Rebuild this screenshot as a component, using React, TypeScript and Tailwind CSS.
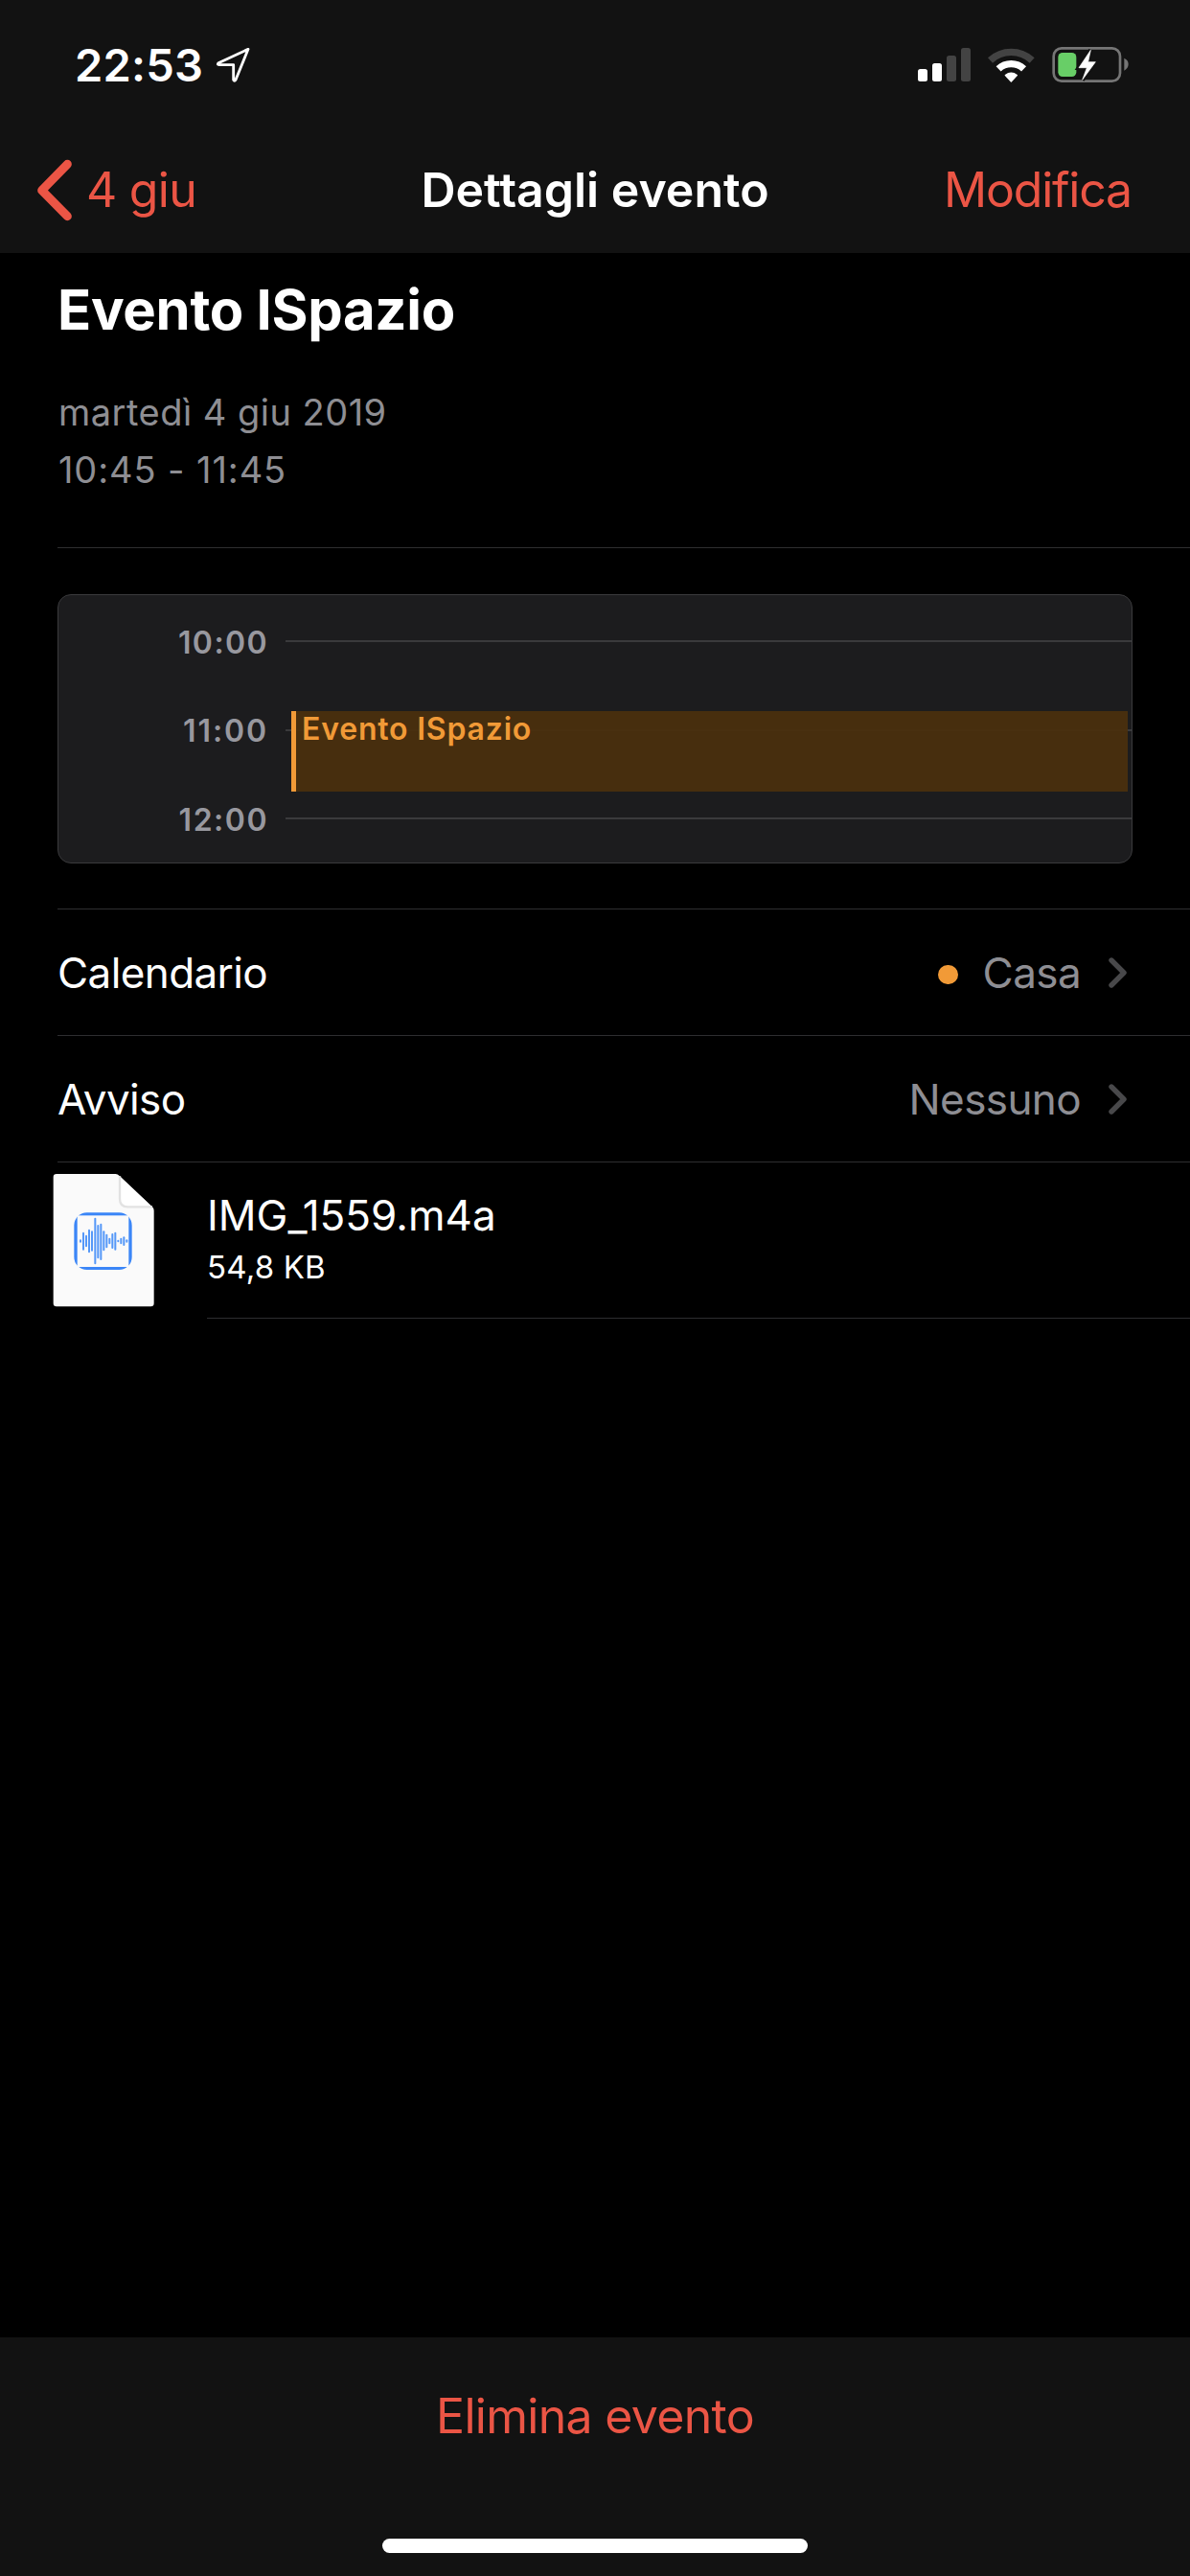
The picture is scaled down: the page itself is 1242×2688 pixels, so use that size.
import type { ReactNode } from 'react';

const HOURS = [
  { label: '10:00', tracking: 'tracking-[1.4px]' },
  { label: '11:00', tracking: 'tracking-[1.9px]' },
  { label: '12:00', tracking: 'tracking-[1.5px]' },
];

// [x, top, bottom] of every bar in the audio waveform
const WAVE_BARS = [
  [102, 236, 244],
  [111, 213, 268],
  [120, 222, 258],
  [129, 204, 276],
  [138, 209, 271],
  [148, 168, 312],
  [157, 190, 294],
  [166, 186, 299],
  [175, 209, 270],
  [184, 219, 261],
  [193, 231, 249],
  [202, 217, 263],
  [211, 213, 268],
  [220, 237, 243],
  [229, 231, 249],
  [238, 227, 254],
  [247, 236, 244],
];

function LocationIcon() {
  return (
    <svg className="w-[37px] h-[39px]" viewBox="676 148 111 117" fill="none">
      <path
        d="M778 158 L685 201 Q680 207 687 207 L732 207 L732 254 Q735 260 739 254 Z"
        stroke="#fff"
        strokeWidth="8.5"
        strokeLinejoin="round"
      />
    </svg>
  );
}

function SignalIcon() {
  return (
    <svg className="w-[55px] h-[35px]" viewBox="0 0 55 35">
      <rect x="0" y="22" width="10" height="13" rx="2.5" fill="#fff" />
      <rect x="15" y="16" width="10" height="19" rx="2.5" fill="#fff" />
      <rect x="30" y="8" width="10" height="27" rx="2.5" fill="#434343" />
      <rect x="45" y="0" width="10" height="35" rx="2.5" fill="#434343" />
    </svg>
  );
}

function WifiIcon() {
  return (
    <svg className="w-[49px] h-[38px]" viewBox="33 24 147 114" fill="none">
      <path d="M40.5 66 A96 96 0 0 1 171.5 66" stroke="#434343" strokeWidth="22" />
      <path d="M66.4 92.6 A58 58 0 0 1 145.6 92.6" stroke="#fff" strokeWidth="22" />
      <path
        d="M88 112.5 Q106 99 124 112.5 L106 132 Z"
        fill="#fff"
        stroke="#fff"
        strokeWidth="4"
        strokeLinejoin="round"
      />
    </svg>
  );
}

function BatteryIcon() {
  const bolt = 'M144 37 L107 92 L132 92 L118 130 L159 74 L136 74 Z';

  return (
    <svg className="w-[81px] h-[39px]" viewBox="20 24 243 117" fill="none">
      <rect x="28" y="31" width="208" height="103" rx="25" stroke="#757575" strokeWidth="8" />
      <path d="M249 62 Q262 68 262 81 Q262 94 249 101 Z" fill="#757575" />
      <rect x="42" y="45" width="57" height="75" rx="14" fill="#68ce67" />
      <path d={bolt} fill="#121212" stroke="#121212" strokeWidth="14" />
      <path d={bolt} fill="#fff" stroke="#fff" strokeWidth="2" strokeLinejoin="round" />
    </svg>
  );
}

function BackIcon() {
  return (
    <svg className="w-[38px] h-[65px]" viewBox="114 498 114 195" fill="none">
      <path
        d="M211 514 L131 596 L211 677"
        stroke="#eb5545"
        strokeWidth="27"
        strokeLinecap="round"
        strokeLinejoin="round"
      />
    </svg>
  );
}

function DisclosureIcon() {
  return (
    <svg className="w-5 h-8" viewBox="0 0 20 32" fill="none">
      <path
        d="M3 3 L16 16 L3 29"
        stroke="#48484a"
        strokeWidth="5.4"
        strokeLinecap="round"
        strokeLinejoin="round"
      />
    </svg>
  );
}

function AudioFileIcon() {
  return (
    <svg className="w-[106px] h-[139px]" viewBox="15 30 318 417" fill="none">
      <path
        d="M27 30 H212 Q219 30 223 35 L328 134 Q332 138 332 145 V435 Q332 445 322 445 H27 Q17 445 17 435 V40 Q17 30 27 30 Z"
        fill="#fafafa"
      />
      <path d="M224 36 V108 Q224 134 250 134 H328 Z" fill="#fff" />
      <path d="M225 37 V108 Q225 133 250 133 H327" stroke="#e2e2e2" strokeWidth="7" />
      <rect x="82" y="151" width="181" height="179" rx="40" fill="#3b86f7" />
      <rect x="92" y="160" width="161" height="161" fill="#fafafa" />
      {WAVE_BARS.map(([x, top, bottom]) => (
        <line
          key={x}
          x1={x}
          x2={x}
          y1={top + 2}
          y2={bottom - 2}
          stroke="#5598f8"
          strokeWidth="6"
          strokeLinecap="round"
        />
      ))}
    </svg>
  );
}

function StatusBar() {
  return (
    <div className="flex h-[135px] items-center justify-between pl-[78px] pr-[64px]">
      <div className="flex items-center gap-[13px]">
        <span className="text-[47px] leading-[60px] font-semibold tracking-[0.2px]">22:53</span>
        <LocationIcon />
      </div>
      <div className="flex items-center">
        <SignalIcon />
        <div className="ml-[18px] mr-[17px]">
          <WifiIcon />
        </div>
        <BatteryIcon />
      </div>
    </div>
  );
}

function NavBar() {
  return (
    <div className="grid h-[126px] grid-cols-[1fr_auto_1fr] items-center pl-[38px] pr-[61px] text-[50px] leading-[64px]">
      <button className="flex items-center gap-[14px] text-[#eb5545] tracking-[-0.75px]">
        <BackIcon />
        4 giu
      </button>
      <h2 className="ml-[23px] font-semibold">Dettagli evento</h2>
      <button className="justify-self-end text-[#eb5545] tracking-[-1.2px]">Modifica</button>
    </div>
  );
}

function DayPreview() {
  return (
    <div className="relative mr-[60px] mt-12 h-[281px] rounded-[14px] border border-[#3a3a3c] bg-[#1c1c1e] pt-[2px]">
      {HOURS.map(({ label, tracking }) => (
        <div key={label} className="flex h-[92.5px] items-center gap-[18px]">
          <span
            className={`w-[219px] pt-[3px] text-right text-[32px] leading-10 font-semibold text-[#98989f] ${tracking}`}
          >
            {label}
          </span>
          <div className="h-[2px] flex-1 bg-[#3a3a3c]" />
        </div>
      ))}
      <div className="absolute left-[243px] right-[4px] top-[121px] h-[84px] border-l-[5px] border-[#f19a37] bg-[#4b300d]/92 pl-[6px] text-[32px] leading-[37px] font-semibold tracking-[0.8px] text-[#f19a37]">
        Evento ISpazio
      </div>
    </div>
  );
}

interface DetailRowProps {
  label: string;
  children: ReactNode;
}

function DetailRow({ label, children }: DetailRowProps) {
  return (
    <div className="flex h-[132px] items-center justify-between border-b border-[#2e2e30] pr-[65px] text-[44px] leading-[56px] tracking-[-0.6px]">
      <span>{label}</span>
      <div className="flex items-center text-[#8e8e93]">
        {children}
        <div className="ml-[29px]">
          <DisclosureIcon />
        </div>
      </div>
    </div>
  );
}

export default function App() {
  return (
    <div className="flex h-[2688px] w-[1242px] flex-col overflow-hidden bg-black font-['Inter',sans-serif] text-white">
      <header className="h-[264px] bg-[#121212]">
        <StatusBar />
        <NavBar />
      </header>

      <main className="flex-1">
        <div className="pl-[60px]">
          <div className="border-b border-[#2e2e30] pb-[51px] pt-[19px]">
            <h1 className="text-[58px] leading-[80px] font-bold tracking-[-0.3px]">Evento ISpazio</h1>
            <div className="mt-[37px] text-[38px] leading-[60px] text-[#8e8e93]">
              <p className="pl-px tracking-[0.48px]">martedì 4 giu 2019</p>
              <p className="pl-px tracking-[0.9px]">10:45 - 11:45</p>
            </div>
          </div>

          <DayPreview />

          <div className="mt-[47px] border-t border-[#2e2e30]">
            <DetailRow label="Calendario">
              <span className="mr-[26px] mt-[5px] h-5 w-[21px] rounded-full bg-[#f19a37]" />
              Casa
            </DetailRow>
            <DetailRow label="Avviso">Nessuno</DetailRow>
          </div>
        </div>

        <div className="flex pl-[55px]">
          <div className="pt-3">
            <AudioFileIcon />
          </div>
          <div className="ml-[55px] h-[163px] flex-1 border-b border-[#2e2e30] pt-[25px]">
            <p className="text-[44px] leading-[60px]">IMG_1559.m4a</p>
            <p className="text-[33px] leading-[49px] tracking-[0.2px]">54,8 KB</p>
          </div>
        </div>
      </main>

      <footer className="flex h-[249px] flex-col items-center bg-[#121212] pt-[50px]">
        <button className="text-[50px] leading-[64px] tracking-[-0.7px] text-[#eb5545]">Elimina evento</button>
        <div className="mt-[96px] h-[15px] w-[444px] rounded-full bg-white" />
      </footer>
    </div>
  );
}
